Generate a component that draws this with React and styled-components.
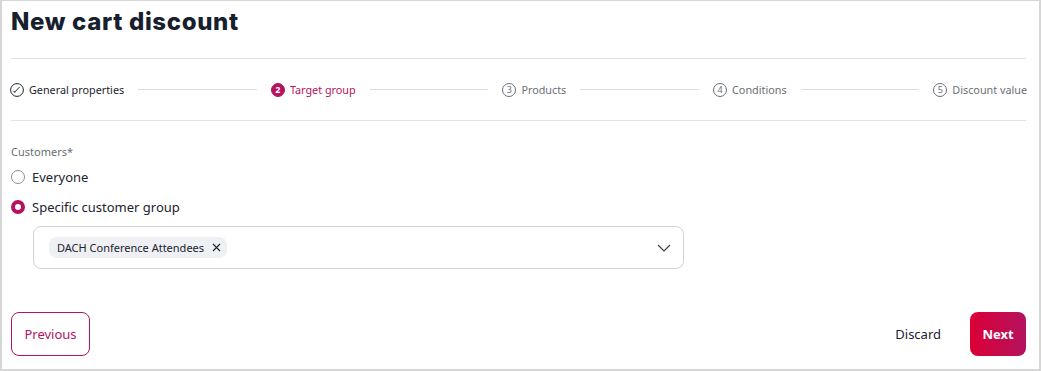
import React from "react";
import styled, { createGlobalStyle } from "styled-components";

const Global = createGlobalStyle`
  html, body { margin: 0; padding: 0; background: #fff; }
  body { font-family: "Noto Sans", "Open Sans", sans-serif; color: #1b2330; }
  * { box-sizing: border-box; }
`;

const Frame = styled.div`
  width: 1041px;
  height: 371px;
  border: 2px solid #d6d6d6;
  border-top-width: 1px;
  padding: 0 13px 0 9px;
  display: flex;
  flex-direction: column;
`;

const Title = styled.h1`
  margin: 0;
  padding-top: 6px;
  height: 57px;
  font-family: Inter, "Noto Sans", sans-serif;
  font-weight: 800;
  font-size: 24px;
  letter-spacing: 0.65px;
  color: #17202e;
`;

const Divider = styled.div`
  height: 1px;
  background: #e2e2e2;
`;

const Stepper = styled.div`
  display: flex;
  align-items: center;
  height: 61px;
  margin-left: -1px;
  margin-right: -1px;
`;

const Step = styled.div`
  display: flex;
  align-items: center;
  gap: 5px;
  font-size: 10.8px;
  color: ${(p) => (p.$active ? "#b5125f" : p.$done ? "#1b2330" : "#6b6f76")};
  white-space: nowrap;
`;

const StepDot = styled.span`
  width: 14px;
  height: 14px;
  border-radius: 50%;
  display: inline-flex;
  align-items: center;
  justify-content: center;
  font-size: 9px;
  font-weight: ${(p) => (p.$active ? 700 : 400)};
  line-height: 1;
  border: 1px solid ${(p) => (p.$active ? "#b5125f" : p.$done ? "#1b2330" : "#6b6f76")};
  background: ${(p) => (p.$active ? "#b5125f" : "transparent")};
  color: ${(p) => (p.$active ? "#fff" : "#6b6f76")};
`;

const StepLine = styled.div`
  flex: 1;
  height: 1px;
  background: #dcdcdc;
  margin: 0 14px;
`;

const Body = styled.div`
  padding-top: 23px;
  display: flex;
  flex-direction: column;
`;

const Label = styled.div`
  font-size: 11px;
  color: #6b6f76;
  height: 18px;
`;

const RadioRow = styled.label`
  display: flex;
  align-items: center;
  gap: 7px;
  height: 30px;
  font-size: 13px;
  color: #1b2330;
`;

const RadioCircle = styled.span`
  width: 14px;
  height: 14px;
  border-radius: 50%;
  border: ${(p) => (p.$checked ? "4px solid #b5125f" : "1px solid #8a8d92")};
  background: #fff;
`;

const SelectBox = styled.div`
  margin: 4px 0 0 22px;
  width: 651px;
  height: 43px;
  border: 1px solid #cfd2d6;
  border-radius: 8px;
  display: flex;
  align-items: center;
  justify-content: space-between;
  padding: 0 12px 0 15px;
`;

const Chip = styled.span`
  display: inline-flex;
  align-items: center;
  gap: 8px;
  height: 21px;
  padding: 0 6px 0 8px;
  background: #eef0f3;
  border-radius: 8px;
  font-size: 11px;
  color: #1b2330;
`;

const Footer = styled.div`
  margin-top: auto;
  height: 57px;
  display: flex;
  align-items: flex-start;
  justify-content: space-between;
`;

const OutlineButton = styled.button`
  height: 44px;
  width: 79px;
  padding: 0;
  border: 1px solid #b5125f;
  border-radius: 8px;
  background: #fff;
  color: #b5125f;
  font-family: inherit;
  font-size: 13px;
`;

const Actions = styled.div`
  display: flex;
  align-items: center;
  gap: 29px;
`;

const TextButton = styled.button`
  border: none;
  background: none;
  font-family: inherit;
  font-size: 13px;
  color: #1b2330;
  padding: 0;
`;

const PrimaryButton = styled.button`
  height: 44px;
  width: 56px;
  border: none;
  border-radius: 8px;
  background: linear-gradient(90deg, #dc0036 0%, #b3125f 100%);
  color: #fff;
  font-family: inherit;
  font-weight: 700;
  font-size: 13px;
`;

const CheckIcon = () => (
  <svg width="14" height="14" viewBox="0 0 14 14" fill="none">
    <circle cx="7" cy="7" r="6.4" stroke="#1b2330" strokeWidth="1" />
    <path d="M4.6 9.2 L9.4 4.2" stroke="#1b2330" strokeWidth="1" strokeLinecap="round" />
    <path d="M3.7 8.1 L4.6 9.2" stroke="#1b2330" strokeWidth="1" strokeLinecap="round" />
  </svg>
);

const steps = [
  { n: 1, label: "General properties", done: true },
  { n: 2, label: "Target group", active: true },
  { n: 3, label: "Products" },
  { n: 4, label: "Conditions" },
  { n: 5, label: "Discount value" },
];

export default function App() {
  return (
    <>
      <Global />
      <Frame>
        <Title>New cart discount</Title>
        <Divider />
        <Stepper>
          {steps.map((s, i) => (
            <React.Fragment key={s.n}>
              {i > 0 && <StepLine />}
              <Step $active={s.active} $done={s.done}>
                {s.done ? <CheckIcon /> : <StepDot $active={s.active}>{s.n}</StepDot>}
                {s.label}
              </Step>
            </React.Fragment>
          ))}
        </Stepper>
        <Divider />
        <Body>
          <Label>Customers*</Label>
          <RadioRow>
            <RadioCircle />
            Everyone
          </RadioRow>
          <RadioRow>
            <RadioCircle $checked />
            Specific customer group
          </RadioRow>
          <SelectBox>
            <Chip>
              DACH Conference Attendees
              <svg width="9" height="9" viewBox="0 0 9 9">
                <path d="M1 1 L8 8 M8 1 L1 8" stroke="#1b2330" strokeWidth="1.1" />
              </svg>
            </Chip>
            <svg width="14" height="8" viewBox="0 0 14 8" fill="none">
              <path d="M1 1 L7 7 L13 1" stroke="#3a3f47" strokeWidth="1.2" />
            </svg>
          </SelectBox>
        </Body>
        <Footer>
          <OutlineButton>Previous</OutlineButton>
          <Actions>
            <TextButton>Discard</TextButton>
            <PrimaryButton>Next</PrimaryButton>
          </Actions>
        </Footer>
      </Frame>
    </>
  );
}
